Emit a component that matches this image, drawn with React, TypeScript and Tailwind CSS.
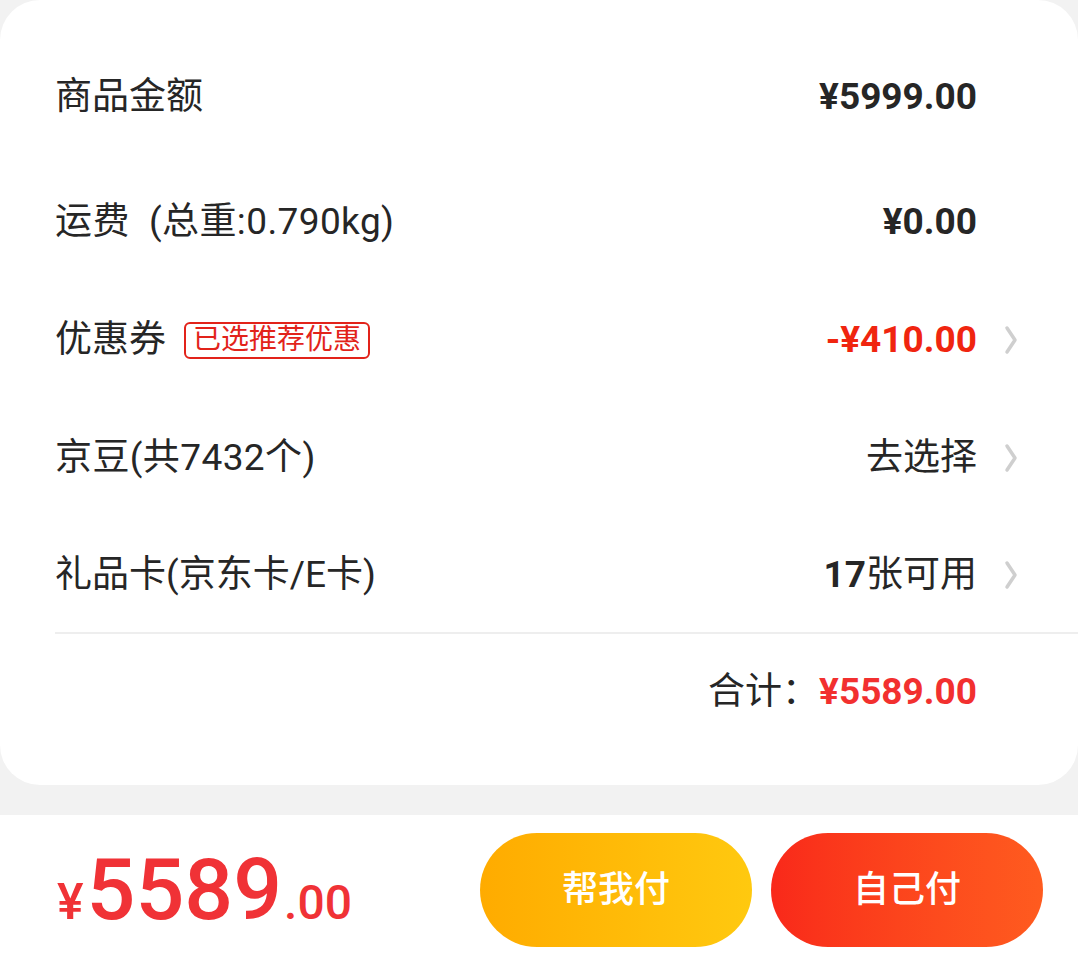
import React from 'react';

const FONT = "font-['Roboto','Noto_Sans_CJK_SC',sans-serif]";

const Chevron: React.FC = () => (
  <svg width="14" height="30" viewBox="0 0 14 30" fill="none">
    <path d="M3 3 L11 15 L3 27" stroke="#cfcfcf" strokeWidth="3.5" strokeLinecap="round" strokeLinejoin="round" />
  </svg>
);

type RowProps = {
  label: React.ReactNode;
  value: React.ReactNode;
  arrow?: boolean;
  h: string;
};

const Row: React.FC<RowProps> = ({ label, value, arrow, h }) => (
  <div className={`flex items-center ${h}`}>
    <div className="flex-1 flex items-center text-[37px] text-[#262626]">{label}</div>
    <div className="flex items-center">{value}</div>
    <div className="w-[41px] flex justify-end">{arrow && <Chevron />}</div>
  </div>
);

const App: React.FC = () => {
  return (
    <div className={`w-[1078px] h-[964px] bg-[#f2f2f2] flex flex-col ${FONT} overflow-hidden`}>
      {/* order summary card */}
      <div className="bg-white rounded-[40px] pt-[31px] pb-[35px]">
        <div className="pl-[55px] pr-[60px]">
          <Row
            h="h-[132px]"
            label="商品金额"
            value={<span className="text-[37px] font-bold text-[#262626]">¥5999.00</span>}
          />
          <Row
            h="h-[118px]"
            label={<span className="tracking-[0.4px]">运费&nbsp;&nbsp;(总重:0.790kg)</span>}
            value={<span className="text-[37px] font-bold text-[#262626]">¥0.00</span>}
          />
          <Row
            h="h-[118px]"
            arrow
            label={
              <>
                <span>优惠券</span>
                <span className="ml-[18px] border-2 border-[#e2231a] rounded-[6px] px-[7px] h-[37px] flex items-center text-[28px] leading-none text-[#e2231a]">
                  已选推荐优惠
                </span>
              </>
            }
            value={<span className="text-[37px] font-bold text-[#f0250f]">-¥410.00</span>}
          />
          <Row
            h="h-[118px]"
            arrow
            label={<span className="tracking-[0.4px]">京豆(共7432个)</span>}
            value={<span className="text-[37px] text-[#262626]">去选择</span>}
          />
          <Row
            h="h-[115px]"
            arrow
            label="礼品卡(京东卡/E卡)"
            value={
              <span className="text-[37px] text-[#262626]">
                <span className="font-bold">17</span>张可用
              </span>
            }
          />
        </div>
        <div className="ml-[55px] h-[2px] bg-[#eeeeee]" />
        <div className="h-[116px] flex items-center justify-end pr-[101px]">
          <span className="text-[37px] text-[#262626]">合计：</span>
          <span className="text-[37px] font-bold text-[#f2302f]">¥5589.00</span>
        </div>
      </div>

      <div className="h-[30px]" />

      {/* bottom pay bar */}
      <div className="flex-1 bg-white flex items-center pl-[57px] pr-[35px]">
        <div className="flex-1 flex items-baseline text-[#f03236] font-medium leading-none">
          <span className="text-[50px]">¥</span>
          <span className="text-[86px] ml-[3px]">5589</span>
          <span className="text-[48px] ml-[2px]">.00</span>
        </div>
        <button className="w-[272px] h-[114px] rounded-full bg-gradient-to-r from-[#ffab00] to-[#ffc90f] text-white text-[36px] font-medium">
          帮我付
        </button>
        <button className="ml-[19px] w-[272px] h-[114px] rounded-full bg-gradient-to-r from-[#f9281a] to-[#ff5b1f] text-white text-[36px] font-medium">
          自己付
        </button>
      </div>
    </div>
  );
};

export default App;
